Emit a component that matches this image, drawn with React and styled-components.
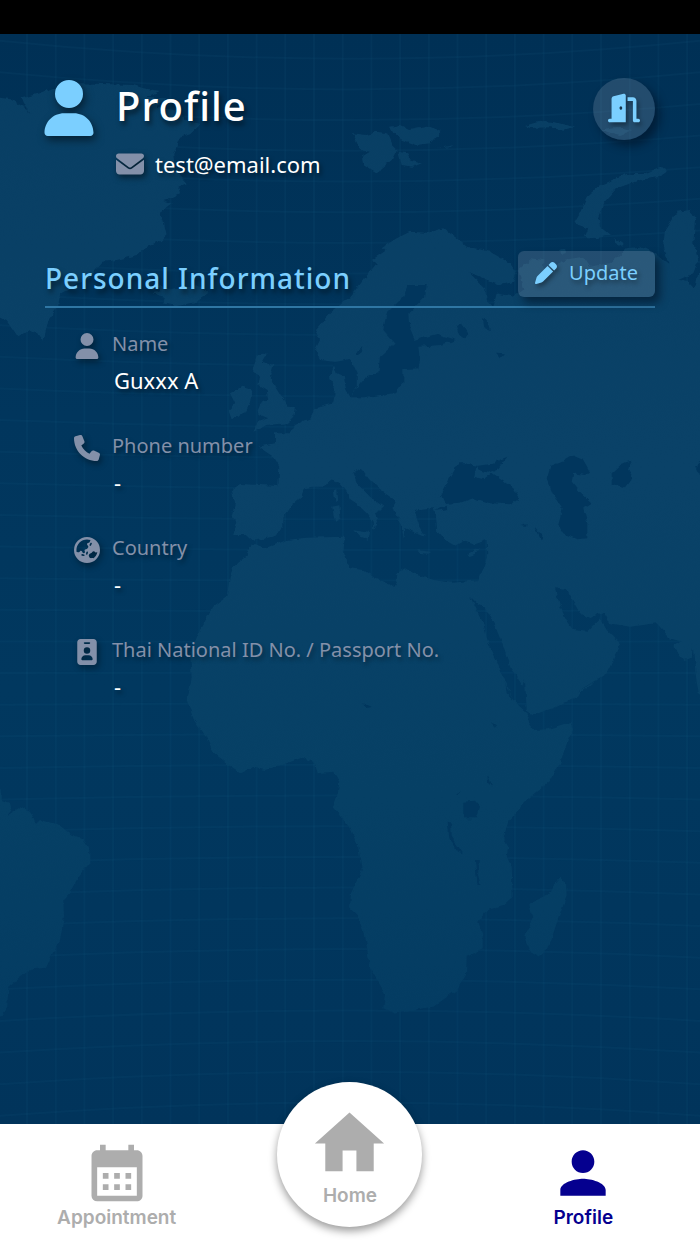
import React from 'react';
import styled, { createGlobalStyle } from 'styled-components';
import { FaUser, FaEnvelope, FaPhone, FaEarthAsia, FaIdBadge, FaDoorOpen, FaPen } from 'react-icons/fa6';
import { MdCalendarMonth, MdHome, MdPerson } from 'react-icons/md';

const color = {
  sea: '#01365d',
  land: '#094166',
  accent: '#7bcfff',
  muted: '#8390a9',
  idle: '#adadad',
  active: '#05008f',
};

const GlobalStyle = createGlobalStyle`
  *, *::before, *::after { box-sizing: border-box; }
  html, body, #root { height: 100%; }
  body {
    margin: 0;
    background: #fff;
    font-family: "Noto Sans", sans-serif;
  }
`;

const Page = styled.div`
  min-height: 100%;
  display: flex;
  flex-direction: column;
`;

const StatusBar = styled.div`
  height: 34px;
  background: #000;
`;

const Screen = styled.main`
  position: relative;
  isolation: isolate;
  flex: 1;
  padding: 44px 45px 60px;
  background: ${color.sea};
  overflow: hidden;
`;

const MapArt = styled.svg`
  position: absolute;
  inset: 0;
  z-index: -1;
  width: 100%;
  height: 100%;
`;

const Header = styled.header`
  display: flex;
  align-items: flex-start;
  gap: 23px;
`;

const Avatar = styled.div`
  display: flex;
  width: 48px;
  padding-top: 2px;
  justify-content: center;
  color: ${color.accent};
  filter: drop-shadow(2px 4px 4px rgba(0, 0, 0, 0.5));
  svg { flex: none; }
`;

const Identity = styled.div`
  flex: 1;
`;

const Title = styled.h1`
  margin: 0;
  color: #fff;
  font-size: 40px;
  font-weight: 500;
  line-height: 56px;
  letter-spacing: 1px;
  text-shadow: 2px 4px 5px rgba(0, 0, 0, 0.5);
`;

const Email = styled.p`
  display: flex;
  align-items: center;
  gap: 11px;
  margin: 15px 0 0;
  color: #fff;
  font-size: 22px;
  line-height: 30px;
  text-shadow: 2px 3px 4px rgba(0, 0, 0, 0.5);
  svg {
    color: ${color.muted};
    filter: drop-shadow(2px 3px 3px rgba(0, 0, 0, 0.5));
  }
`;

const GlassButton = styled.button`
  display: flex;
  align-items: center;
  justify-content: center;
  gap: ${(p) => (p.$round ? '0' : '12px')};
  width: ${(p) => (p.$round ? '62px' : '137px')};
  height: ${(p) => (p.$round ? '62px' : '46px')};
  padding: 0 0 2px;
  border: 0;
  border-radius: ${(p) => (p.$round ? '50%' : '6px')};
  background: rgba(176, 186, 205, 0.2);
  box-shadow: 5px 6px 8px rgba(0, 12, 28, 0.5);
  color: ${color.accent};
  font: 400 20px/28px "Noto Sans", sans-serif;
  text-shadow: 2px 3px 4px rgba(0, 0, 0, 0.4);
  cursor: pointer;
  svg { filter: drop-shadow(2px 3px 2px rgba(0, 0, 0, 0.35)); }
`;

const SectionHead = styled.div`
  display: flex;
  align-items: flex-end;
  justify-content: space-between;
  margin-top: 72px;
  padding-bottom: 9px;
  border-bottom: 2px solid #2f76a3;
`;

const SectionTitle = styled.h2`
  margin: 0;
  color: ${color.accent};
  font-size: 28px;
  font-weight: 500;
  line-height: 38px;
  letter-spacing: 1px;
  text-shadow: 2px 4px 5px rgba(0, 0, 0, 0.5);
`;

const FieldList = styled.dl`
  margin: 0;
  padding: 21px 0 0 29px;
`;

const Field = styled.div`
  margin-bottom: 36px;
`;

const FieldLabel = styled.dt`
  display: flex;
  align-items: center;
  gap: 12px;
  color: ${color.muted};
  font-size: 20px;
  line-height: 30px;
  text-shadow: 2px 3px 4px rgba(0, 0, 0, 0.4);
`;

const FieldIcon = styled.span`
  display: flex;
  justify-content: center;
  width: 26px;
  padding-top: 4px;
  filter: drop-shadow(2px 3px 3px rgba(0, 0, 0, 0.4));
`;

const FieldValue = styled.dd`
  margin: 6px 0 0 40px;
  color: #fff;
  font-size: 22px;
  line-height: 30px;
  text-shadow: 2px 3px 4px rgba(0, 0, 0, 0.5);
`;

const TabBar = styled.nav`
  display: grid;
  grid-template-columns: repeat(3, 1fr);
  justify-items: center;
  height: 120px;
  background: #fff;
`;

const Tab = styled.a`
  display: flex;
  flex-direction: column;
  align-items: center;
  padding-top: 15px;
  color: ${(p) => (p.$active ? color.active : color.idle)};
  font: 600 19px/22px Inter, sans-serif;
  text-decoration: none;
`;

const HomeTab = styled(Tab)`
  z-index: 1;
  width: 145px;
  height: 145px;
  margin-top: -42px;
  padding-top: 20px;
  border-radius: 50%;
  background: #fff;
  box-shadow: 0 4px 8px rgba(0, 0, 0, 0.4);
`;

// Coast outlines are kept as strips: an origin on the map and thirds of a unit from it.
const strip = (x, y, text) =>
  text.split(' ').map((pair) => {
    const [dx, dy] = pair.split(',').map(Number);
    return `${(x + dx / 3).toFixed(1)},${(y + dy / 3).toFixed(1)}`;
  });
const coast = (...strips) => strips.flatMap((s) => strip(...s)).join(' ');

const lands = [
  // Greenland
  coast([0, 30, '-20,200 10,205 35,208 60,225 95,252 72,222 65,205 120,190 165,172 240,160 330,163 400,165 430,175 480,183 440,200 500,205 470,230 540,240 560,272 600,282 570,310 540,320 530,345 520,370 525,420 560,460 535,470 540,490 520,500 490,510 515,520 480,545 490,570 500,615 480,635 430,655 410,675 350,690 310,695 270,740 180,790 175,830 145,870 130,935 115,915 90,900 55,922 20,870 -20,850']),
  // Iceland
  coast([0, 30, '455,790 485,783 470,763 510,778 560,768 610,770 625,790 590,815 530,828 490,820 495,800']),
  // Svalbard and Franz Josef Land
  coast([350, 30, '5,310 50,315 80,305 110,310 125,345 140,360 125,390 95,415 82,432 40,405 35,380 60,365 30,360']),
  coast([350, 30, '120,290 150,285 180,300 230,290 272,305 240,340 200,345 160,330 130,310']),
  coast([350, 30, '145,365 175,370 185,390 215,400 190,410 155,405']),
  coast([350, 30, '525,288 580,272 630,280 675,292 640,302 600,292 540,294']),
  coast([350, 30, '750,300 800,290 850,300 810,315']),
  coast([350, 30, '262,355 310,346 300,352']),
  // Novaya Zemlya
  coast([350, 30, '940,408 950,425 930,440 870,450 800,475 760,520 745,560 750,590 780,615 740,625 705,620 715,595 670,580 690,545 710,500 750,465 830,432 880,432']),
  coast([350, 30, '795,625 825,645 815,650 795,638']),
  coast([350, 30, '630,660 645,655 648,668 635,672']),
  // Great Britain and Ireland
  coast([0, 310, '770,135 800,130 785,155 820,165 810,200 825,230 850,270 865,290 885,292 880,320 860,340 800,345 760,362 775,335 805,325 770,310 780,285 805,270 800,240 775,225 780,200 758,180']),
  coast([0, 310, '690,250 725,230 755,240 750,280 735,310 695,328 685,300 705,280']),
  // Mediterranean islands
  coast([0, 310, '1002,545 1012,540 1014,570 1006,576']),
  coast([0, 310, '996,590 1018,586 1022,625 1005,635']),
  coast([350, 310, '10,658 60,665 56,690 30,680']),
  coast([350, 310, '200,720 245,725 240,732 205,728']),
  coast([350, 310, '350,732 390,715 375,735 358,740']),
  // South America
  coast([0, 700, '-20,268 5,268 5,300 30,310 35,330 20,348 60,322 95,340 108,372 120,360 180,375 220,405 250,415 268,450 268,490 230,540 208,580 190,600 192,650 180,720 155,765 140,800 100,805 60,830 25,860 22,920 -20,980']),
  // Madagascar
  coast([150, 680, '1232,590 1248,610 1250,645 1230,700 1195,805 1165,830 1140,815 1123,770 1147,715 1138,670 1195,645 1215,610']),
  // Africa, Arabia, Europe and Asia
  coast(
    [150, 680, '1065,0 1070,40 1110,80 1138,105 1132,125 1150,150 1190,148 1265,125 1265,155 1245,205 1230,250 1200,300 1130,360 1075,425 1060,475 1075,500 1070,530 1085,560 1088,650 1060,675 1010,690 985,725 998,765 998,808 950,830 948,885 920,930 850,980 800,988 730,998 700,985 705,940 660,865 645,765 620,705 600,685 603,640 635,570 625,500 600,440 550,380 563,340 568,305 550,275 500,280 490,245 455,233 410,250 345,270 305,262 270,280 240,260 190,220 165,165 130,115 110,60 125,10'],
    [0, 310, '565,1160 575,1100 570,1030 600,960 640,890 680,860 690,800 700,770 740,740 755,700 800,715 860,690 920,683 1035,680 1030,720'],
    [350, 310, '0,775 40,780 75,805 130,828 145,800 140,790 165,775 200,795 260,812 310,818 385,810 400,770 412,740 410,690 375,703 340,690 312,706 285,690 262,665 258,620 250,592 190,600 205,645 225,680 165,655 165,688 155,640 130,600 135,570 90,540 60,510 45,490 20,478 8,490 20,520 60,560 100,590 78,612 85,630 70,660 68,635 50,610 30,590 0,570'],
    [0, 310, '1040,545 1020,520 1000,508 970,530 940,530 910,535 905,560 870,590 850,620 850,650 820,680 760,692 740,675 700,675 710,640 695,620 705,580 695,540 720,522 780,525 835,528 838,470 820,440 775,410 825,400 825,370 870,370 885,345 930,325 945,295 1000,280 1005,240 990,200 1000,170 1030,155 1000,155 960,150 945,120 960,90 945,60 990,10'],
    [350, 30, '0,800 40,750 80,700 65,690 110,660 100,650 140,625 180,605 230,608 280,595 320,625 350,650 420,665 480,700 500,730 490,755 450,765 400,745 355,725 380,750 405,775 410,810 430,830 440,790 490,800 520,780 505,720 545,685 580,690 580,720 640,690 700,680 720,710 780,700 830,655 870,650 915,670 955,705 940,640 945,600 980,545 1020,540 1035,570 1030,640 1045,690 1030,730 985,750 1010,752 1035,778 1045,730 1090,720'],
    [350, 310, '1090,1180 1050,1170 1040,1120 1028,1010 1025,1045 1000,1050 970,1010 995,995 960,985 920,940 840,950 780,940 760,905 720,925 690,910 650,840 615,835 630,890 655,940 670,960 710,965 750,925 770,960 810,1000 780,1070 770,1090 690,1140 660,1170 600,1200'],
    [150, 680, '1340,0 1280,50 1220,80 1150,105 1130,90 1125,0'],
    [350, 310, '520,1130 480,1070 460,1010 440,960 410,900 395,880 385,885 360,858 370,880 400,940 415,1000 440,1050 470,1130 490,1170']
  ),
];

const waters = [
  // Gulf of Bothnia and the Baltic
  coast(
    [350, 30, '175,765 230,765 225,800 175,850 178,890 195,930 260,912 320,930 270,945 205,950'],
    [350, 310, '210,150 205,178 160,180 160,215 135,250 90,255 40,262 0,262 20,235 45,205 85,190 90,140 135,100'],
    [350, 30, '100,900 110,850 160,800']
  ),
  // Skagerrak and Kattegat
  coast([350, 310, '-50,158 -15,150 0,145 20,190 20,230 0,262 -12,240 -18,200 -40,190']),
  // Lakes of Finland and Russia
  coast([350, 310, '318,48 335,43 358,75 345,85 325,70']),
  coast([350, 310, '396,25 410,30 420,60 400,50']),
  coast([350, 310, '435,128 465,130 450,145']),
  coast([350, 310, '20,125 40,112 35,130 22,138']),
  // Black Sea and the Sea of Azov
  coast([350, 310, '325,460 345,460 380,468 372,500 400,508 425,490 490,535 508,565 485,583 420,580 370,565 330,578 285,582 273,555 300,505']),
  coast([350, 310, '380,468 420,462 472,440 445,475 415,488 390,480']),
  coast([350, 310, '255,603 295,585 292,597']),
  // Caspian and Aral
  coast([350, 310, '590,505 602,465 640,450 665,435 700,450 720,485 705,495 670,490 665,515 690,545 725,578 700,595 712,640 712,685 680,688 640,670 625,645 638,595 610,555']),
  coast([350, 310, '785,490 815,462 845,452 832,475 848,500 825,532 785,522']),
  coast([350, 310, '1035,470 1060,450 1060,500 1042,485']),
  coast([350, 310, '555,652 580,680 572,688']),
  coast([350, 310, '512,648 530,643 528,650']),
  // African lakes
  coast([150, 680, '940,365 975,362 990,380 980,415 940,415']),
  coast([150, 680, '893,425 903,428 905,470 938,520 925,515 898,475']),
  coast([150, 680, '975,540 986,540 984,585 992,614 982,608']),
  coast([150, 680, '1012,282 1020,300 1027,320 1014,305']),
  coast([150, 680, '640,70 665,80 648,84']),
  coast([150, 680, '1027,130 1038,132 1031,140']),
  coast([150, 680, '918,345 932,332 926,342']),
];

const meridians = Array.from({ length: 24 }, (_, i) => 27 + i * 28.7);
const parallels = Array.from({ length: 37 }, (_, i) => {
  const middle = 28 + i * 30.7;
  const bend = (middle - 660) * 0.03;
  return `M0 ${middle + bend}Q350 ${middle - bend} 700 ${middle + bend}`;
});

function WorldMap() {
  return (
    <MapArt viewBox="0 34 700 1090" preserveAspectRatio="xMidYMin slice" aria-hidden="true">
      <defs>
        <filter id="shore" x="-5%" y="-5%" width="110%" height="110%" colorInterpolationFilters="sRGB">
          <feTurbulence type="fractalNoise" baseFrequency="0.15" numOctaves="2" seed="4" />
          <feDisplacementMap in="SourceGraphic" scale="5" xChannelSelector="R" yChannelSelector="G" />
        </filter>
        <linearGradient id="depth" x1="0" y1="0" x2="0" y2="1">
          <stop offset="0" stopColor="#003055" />
          <stop offset="0.35" stopColor="#01365d" />
          <stop offset="0.6" stopColor="#01385f" />
          <stop offset="1" stopColor="#01345b" />
        </linearGradient>
        <linearGradient id="soil" gradientUnits="userSpaceOnUse" x1="0" y1="34" x2="0" y2="1124">
          <stop offset="0" stopColor="#083e63" />
          <stop offset="0.4" stopColor="#0a4268" />
          <stop offset="0.7" stopColor="#064065" />
          <stop offset="1" stopColor="#033a61" />
        </linearGradient>
      </defs>
      <rect y="34" width="700" height="1090" fill="url(#depth)" />
      <g fill="none" stroke="#2c7095" strokeOpacity="0.08" strokeWidth="2">
        {meridians.map((x) => <path key={x} d={`M${x} 34V1124`} />)}
        {parallels.map((d) => <path key={d} d={d} />)}
      </g>
      <g filter="url(#shore)">
        {lands.map((points) => <polygon key={points} points={points} fill="url(#soil)" />)}
        {waters.map((points) => <polygon key={points} points={points} fill={color.sea} />)}
      </g>
    </MapArt>
  );
}

const fields = [
  { label: 'Name', value: 'Guxxx A', Icon: FaUser },
  { label: 'Phone number', value: '-', Icon: FaPhone },
  { label: 'Country', value: '-', Icon: FaEarthAsia },
  { label: 'Thai National ID No. / Passport No.', value: '-', Icon: FaIdBadge },
];

export default function App() {
  return (
    <Page>
      <GlobalStyle />
      <StatusBar />
      <Screen>
        <WorldMap />
        <Header>
          <Avatar><FaUser size={56} /></Avatar>
          <Identity>
            <Title>Profile</Title>
            <Email><FaEnvelope size={28} />test@email.com</Email>
          </Identity>
          <GlassButton type="button" $round aria-label="Log out"><FaDoorOpen size={32} /></GlassButton>
        </Header>
        <section>
          <SectionHead>
            <SectionTitle>Personal Information</SectionTitle>
            <GlassButton type="button"><FaPen size={22} />Update</GlassButton>
          </SectionHead>
          <FieldList>
            {fields.map(({ label, value, Icon }) => (
              <Field key={label}>
                <FieldLabel><FieldIcon><Icon size={26} /></FieldIcon>{label}</FieldLabel>
                <FieldValue>{value}</FieldValue>
              </Field>
            ))}
          </FieldList>
        </section>
      </Screen>
      <TabBar>
        <Tab href="#appointment"><MdCalendarMonth size={68} />Appointment</Tab>
        <HomeTab href="#home"><MdHome size={83} />Home</HomeTab>
        <Tab href="#profile" $active><MdPerson size={68} />Profile</Tab>
      </TabBar>
    </Page>
  );
}
